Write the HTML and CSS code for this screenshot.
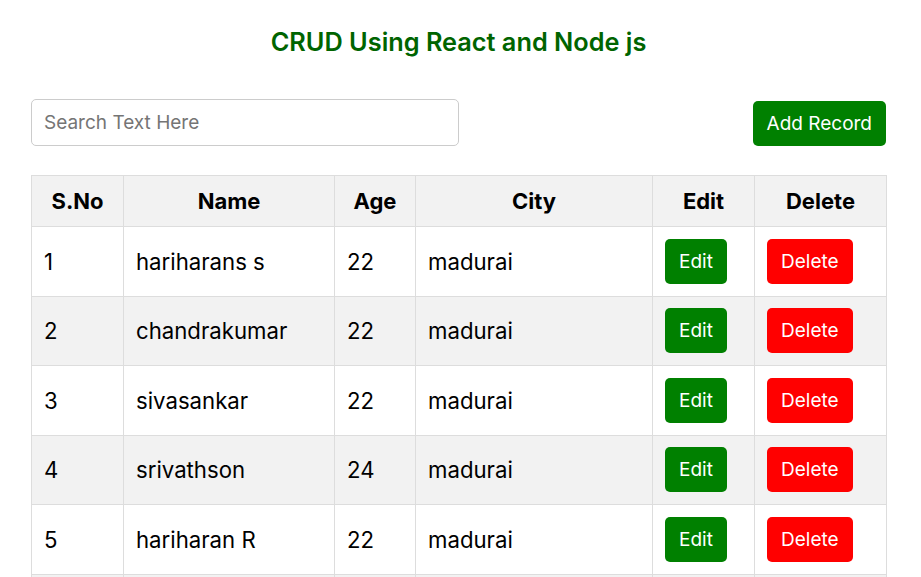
FILE: index.html
```html
<!DOCTYPE html>
<html>
<head>
<meta charset="utf-8">
<link rel="stylesheet" href="styles.css">
</head>
<body>
<div class="app">
  <h1 class="title">CRUD Using React and Node js</h1>
  <div class="toolbar">
    <input class="search" type="text" placeholder="Search Text Here">
    <button class="btn btn-add">Add Record</button>
  </div>
  <table class="grid">
    <thead>
      <tr><th class="c-sno">S.No</th><th class="c-name">Name</th><th class="c-age">Age</th><th class="c-city">City</th><th class="c-edit">Edit</th><th class="c-del">Delete</th></tr>
    </thead>
    <tbody>
      <tr><td>1</td><td>hariharans s</td><td>22</td><td>madurai</td><td><button class="btn btn-edit">Edit</button></td><td><button class="btn btn-del">Delete</button></td></tr>
      <tr><td>2</td><td>chandrakumar</td><td>22</td><td>madurai</td><td><button class="btn btn-edit">Edit</button></td><td><button class="btn btn-del">Delete</button></td></tr>
      <tr><td>3</td><td>sivasankar</td><td>22</td><td>madurai</td><td><button class="btn btn-edit">Edit</button></td><td><button class="btn btn-del">Delete</button></td></tr>
      <tr><td>4</td><td>srivathson</td><td>24</td><td>madurai</td><td><button class="btn btn-edit">Edit</button></td><td><button class="btn btn-del">Delete</button></td></tr>
      <tr><td>5</td><td>hariharan R</td><td>22</td><td>madurai</td><td><button class="btn btn-edit">Edit</button></td><td><button class="btn btn-del">Delete</button></td></tr>
      <tr class="more"><td></td><td></td><td></td><td></td><td></td><td></td></tr>
    </tbody>
  </table>
</div>
</body>
</html>
```

FILE: styles.css
```css
* { box-sizing: border-box; }
html, body { margin: 0; padding: 0; background: #fff; }
body { font-family: Inter, "Noto Sans", sans-serif; color: #000; }
.app { padding: 27px 35px 0 31px; }
.title {
  margin: 0 0 43px;
  text-align: center;
  font-size: 25.3px;
  font-weight: 600;
  color: #006400;
  line-height: 29px;
}
.toolbar {
  display: flex;
  justify-content: space-between;
  align-items: center;
  margin-bottom: 29px;
}
.search {
  width: 428px;
  height: 47px;
  padding: 0 12px;
  border: 1px solid #ccc;
  border-radius: 5px;
  font-family: Inter, sans-serif;
  font-size: 19px;
  color: #333;
  outline: none;
}
.search::placeholder { color: #757575; }
.btn {
  font-family: Inter, sans-serif;
  font-size: 19px;
  line-height: 23px;
  color: #fff;
  border: none;
  border-radius: 5px;
  cursor: pointer;
}
.btn-add { background: #008000; height: 45px; padding: 0 14px; margin-top: 1px; }
.btn-edit { background: #008000; height: 45px; padding: 0 14px; }
.btn-del { background: #ff0000; height: 45px; padding: 0 14px; }
.grid {
  width: 100%;
  border-collapse: collapse;
  table-layout: fixed;
  font-size: 22.2px;
}
.grid th, .grid td {
  border: 1px solid #ddd;
  padding: 11px 12px;
  text-align: left;
  vertical-align: middle;
  white-space: nowrap;
}
.grid th {
  background: #f2f2f2;
  text-align: center;
  font-weight: 700;
  font-size: 22px;
  height: 51px;
  padding: 0 12px;
}
.grid td { height: 69.5px; }
.grid tbody tr:nth-child(even) td { background: #f2f2f2; }
.c-sno { width: 92px; }
.c-name { width: 211px; }
.c-age { width: 81px; }
.c-city { width: 237px; }
.c-edit { width: 102px; }
.c-del { width: 132px; }
```
